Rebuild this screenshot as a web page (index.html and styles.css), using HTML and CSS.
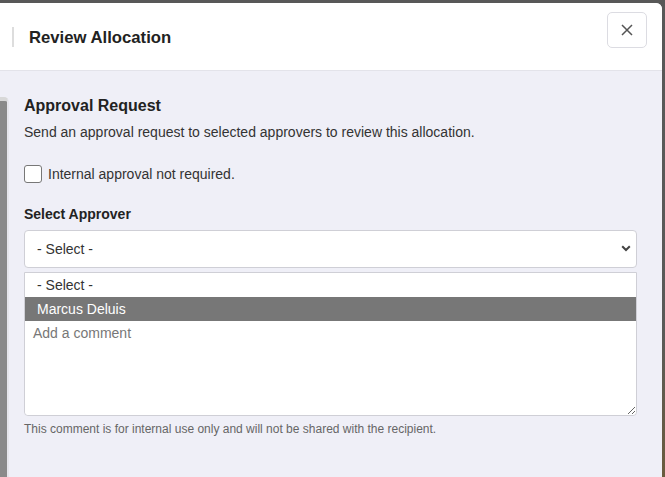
FILE: index.html
```html
<!DOCTYPE html>
<html lang="en">
<head>
    <meta charset="UTF-8">
    <meta name="viewport" content="width=device-width, initial-scale=1.0">
    <title>Review Allocation</title>
    <link rel="stylesheet" href="styles.css">
</head>
<body>

    <div class="modal">
        <div class="modal-header">
            <h3 class="modal-title">Review Allocation</h3>
            <button class="btn-close" type="button" aria-label="Close">
                <svg width="12" height="12" viewBox="0 0 12 12">
                    <path d="M1 1 L11 11 M11 1 L1 11" stroke="#555" stroke-width="1.5" fill="none"/>
                </svg>
            </button>
        </div>

        <div class="modal-body">
            <div class="rail"></div>

            <div class="content">
                <h4>Approval Request</h4>
                <p class="lead">Send an approval request to selected approvers to review this allocation.</p>

                <label class="check">
                    <input type="checkbox">
                    <span>Internal approval not required.</span>
                </label>

                <label class="field-label" for="approver">Select Approver</label>
                <div class="select-wrap">
                    <select id="approver">
                        <option>- Select -</option>
                        <option>Marcus Deluis</option>
                    </select>
                    <svg class="chevron" width="10" height="7" viewBox="0 0 10 7">
                        <path d="M1.2 1.2 L5 5 L8.8 1.2" stroke="#444" stroke-width="2" fill="none"/>
                    </svg>
                </div>

                <div class="comment-box">
                    <ul class="options">
                        <li>- Select -</li>
                        <li class="active">Marcus Deluis</li>
                    </ul>
                    <textarea placeholder="Add a comment"></textarea>
                </div>
                <p class="help">This comment is for internal use only and will not be shared with the recipient.</p>
            </div>
        </div>
    </div>

</body>
</html>
```

FILE: styles.css
```css
:root {
    --panel: #efeff7;
    --line: #cfcfd6;
    --text: #222;
    --muted: #666;
}

* {
    margin: 0;
    padding: 0;
    box-sizing: border-box;
    font-family: 'Liberation Sans', Arial, sans-serif;
}

body {
    height: 477px;
    overflow: hidden;
    background: linear-gradient(#585858, #5a5a58 70%, #6b5c3e);
}

.modal {
    margin: 3px 3px 0 0;
    height: 474px;
    background-color: var(--panel);
    border-top-right-radius: 6px;
    overflow: hidden;
}

.modal-header {
    height: 68px;
    background-color: white;
    border-bottom: 1px solid #e3e3ea;
    display: flex;
    align-items: center;
    padding: 0 15px 0 12px;
}

.modal-title {
    border-left: 2px solid #ddd;
    padding-left: 15px;
    height: 20px;
    line-height: 21px;
    font-size: 16.7px;
    font-weight: bold;
    color: var(--text);
}

.btn-close {
    margin-left: auto;
    align-self: flex-start;
    margin-top: 9px;
    width: 40px;
    height: 36px;
    background: white;
    border: 1px solid #dcdce2;
    border-radius: 5px;
    display: flex;
    align-items: center;
    justify-content: center;
}

.modal-body {
    display: flex;
}

.rail {
    width: 9px;
    margin-top: 26px;
    height: 420px;
    background-color: #8a8a8a;
    border-top: 4px solid #d8d8d8;
    border-right: 2px solid #e6e6ec;
    border-top-right-radius: 5px;
}

.content {
    flex: 1;
    padding: 25px 25px 0 15px;
    color: var(--text);
}

h4 {
    font-size: 16px;
    font-weight: bold;
    line-height: 19px;
}

.lead {
    font-size: 14px;
    line-height: 16px;
    margin-top: 9px;
    color: #333;
}

.check {
    display: flex;
    align-items: center;
    gap: 6px;
    margin-top: 25px;
    font-size: 14px;
    color: #333;
}

.check input {
    appearance: none;
    width: 18px;
    height: 18px;
    border: 1px solid #777;
    border-radius: 3px;
    background: white;
}

.field-label {
    display: block;
    margin-top: 23px;
    font-size: 14px;
    font-weight: bold;
    line-height: 16px;
}

.select-wrap {
    position: relative;
    margin-top: 8px;
}

.select-wrap select {
    appearance: none;
    width: 100%;
    height: 38px;
    padding: 0 12px;
    border: 1px solid var(--line);
    border-radius: 4px;
    background: white;
    font-size: 14px;
    color: #333;
}

.chevron {
    position: absolute;
    right: 6px;
    top: 15px;
}

.comment-box {
    margin-top: 4px;
    border: 1px solid var(--line);
    border-radius: 0 0 4px 4px;
    background: white;
}

.options {
    list-style: none;
}

.options li {
    height: 24px;
    line-height: 24px;
    padding-left: 12px;
    font-size: 14px;
    color: #333;
}

.options li.active {
    background-color: #777;
    color: white;
}

.comment-box textarea {
    display: block;
    width: 100%;
    height: 94px;
    border: none;
    border-radius: 0 0 4px 4px;
    padding: 4px 8px;
    font-size: 14px;
    resize: vertical;
    outline: none;
}

.comment-box textarea::placeholder {
    color: #777;
}

.help {
    margin-top: 6px;
    font-size: 12px;
    color: var(--muted);
}
```
